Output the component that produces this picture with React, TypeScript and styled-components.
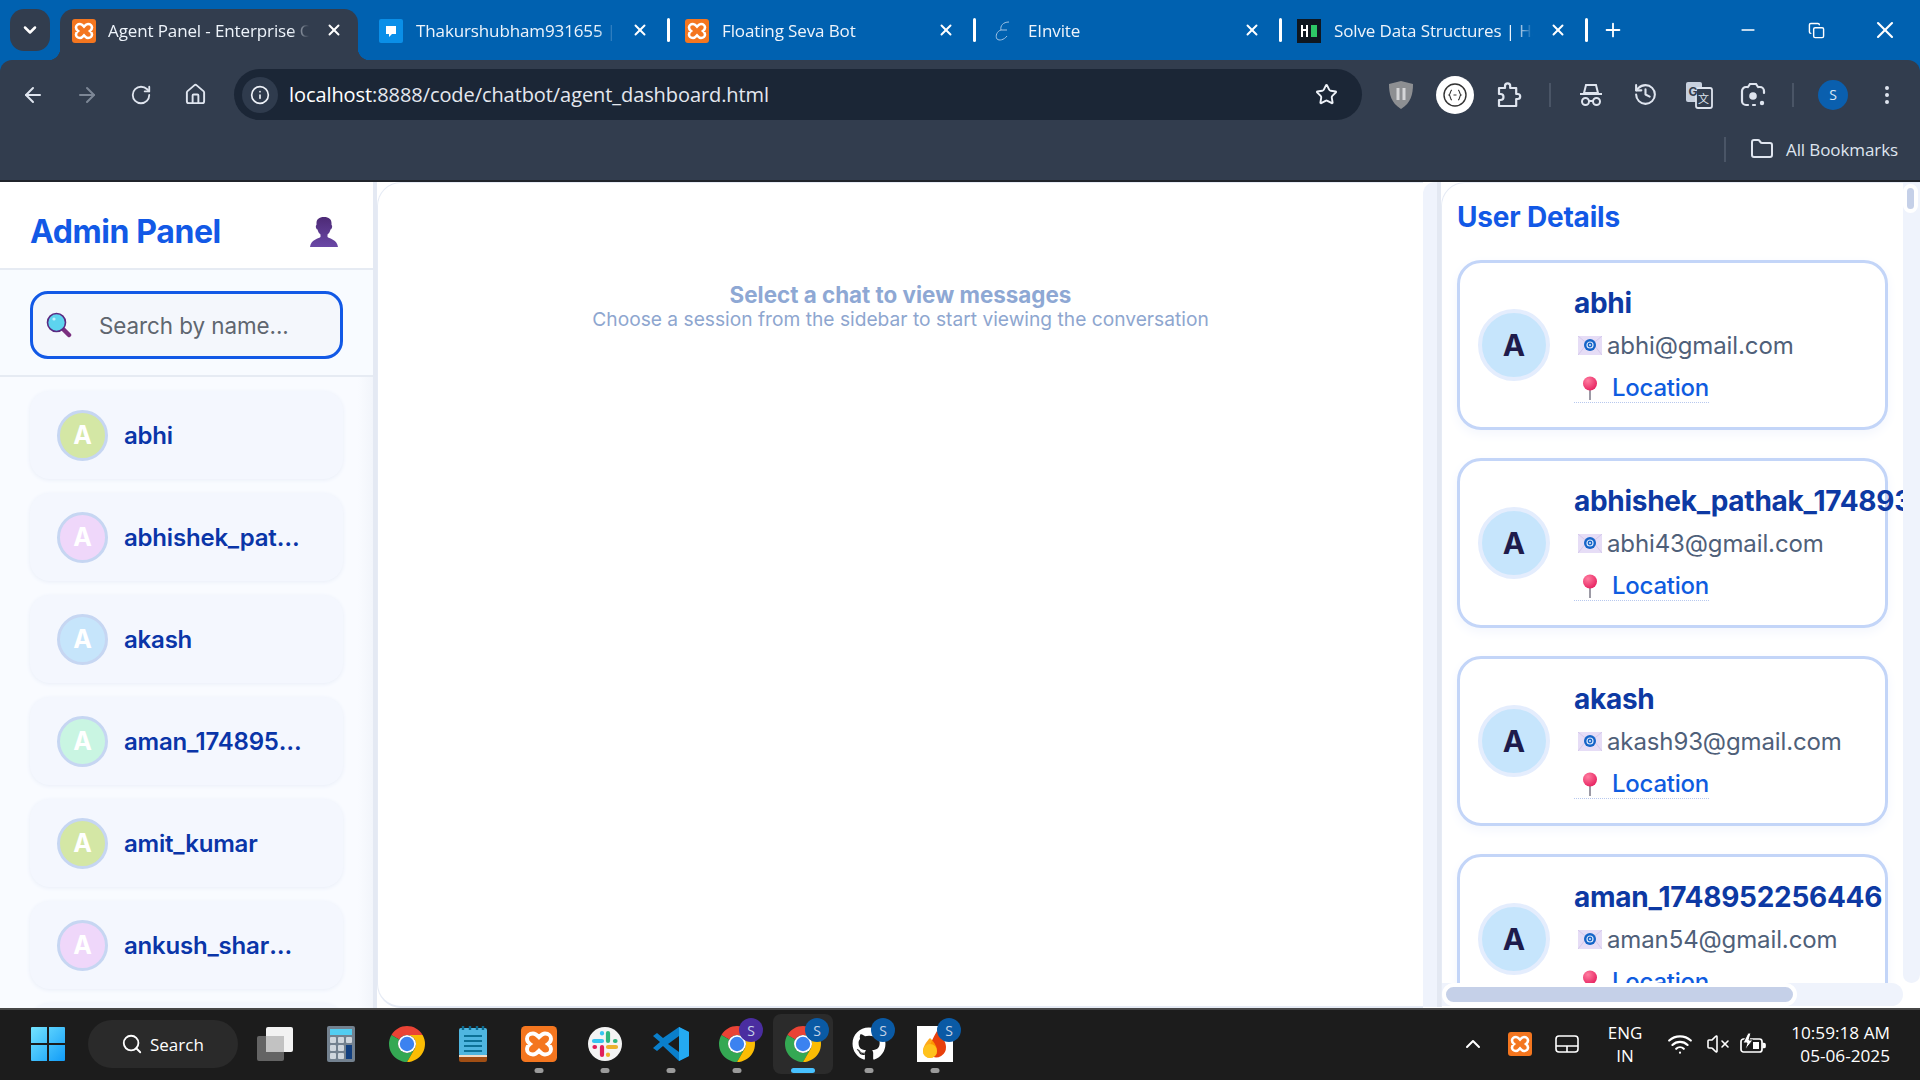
import React from "react";
import styled, { createGlobalStyle } from "styled-components";
import {
  ArrowLeft, ArrowRight, RotateCw, House, Info, Star, History, EllipsisVertical,
  Folder, X, Plus, Minus, Copy, ChevronDown, ChevronUp, Search, Wifi, VolumeX,
} from "lucide-react";
import { FaGithub } from "react-icons/fa";

const Global = createGlobalStyle`
  html, body { margin: 0; padding: 0; background: #fff; overflow: hidden; }
  * { box-sizing: border-box; }
  body { font-family: Inter, "Liberation Sans", sans-serif; }
`;

const Screen = styled.div`
  width: 1920px; height: 1080px; display: flex; flex-direction: column; overflow: hidden; background: #0061b0;
`;

/* ---------- browser chrome ---------- */
const TabStrip = styled.div`
  height: 60px; display: flex; align-items: flex-start; padding-left: 10px; background: #0061b0;
  font-family: "Open Sans", "Noto Sans", sans-serif; color: #fff; flex: none;
`;
const TabMenu = styled.div`
  width: 40px; height: 42px; margin-top: 9px; margin-right: 8px; border-radius: 14px; background: #323d4e;
  display: flex; align-items: center; justify-content: center; color: #fff;
`;
const Tab = styled.div<{ $active?: boolean; $sep?: boolean }>`
  position: relative; width: 306px; height: 51px; margin-top: 9px; padding: 0 20px 8px 15px;
  display: flex; align-items: center; flex: none;
  ${(p) => p.$active && `
    background: #323d4e; border-radius: 14px 14px 0 0; margin-left: 2px; margin-right: 6px; width: 298px; padding: 0 14px 8px 12px;
    &::before, &::after { content: ""; position: absolute; bottom: 0; width: 12px; height: 12px; }
    &::before { left: -12px; background: radial-gradient(circle at 0 0, transparent 12px, #323d4e 12.5px); }
    &::after { right: -12px; background: radial-gradient(circle at 100% 0, transparent 12px, #323d4e 12.5px); }
  `}
  ${(p) => p.$sep && `
    &::after { content: ""; position: absolute; right: 0; top: 9px; width: 3px; height: 24px; background: #fff; border-radius: 2px; }
  `}
`;
const TabTitle = styled.span<{ $active?: boolean }>`
  flex: 1; min-width: 0; margin: 0 15px 0 ${(p) => (p.$active ? 12 : 13)}px; font-size: 17px; white-space: nowrap; overflow: hidden; color: #eef4fb;
  letter-spacing: -0.12px;
  -webkit-mask-image: linear-gradient(90deg, #000 91%, transparent 100%);
  mask-image: linear-gradient(90deg, #000 91%, transparent 100%);
`;
const TabClose = styled.span`
  width: 20px; height: 20px; display: flex; align-items: center; justify-content: center; flex: none; margin-top: -2px;
`;
const NewTab = styled.div`
  width: 50px; height: 42px; margin-top: 9px; display: flex; align-items: center; justify-content: center;
`;
const WindowControls = styled.div`
  margin-left: auto; display: flex; height: 60px; align-items: center;
`;
const WindowButton = styled.div<{ $w: number }>`
  width: ${(p) => p.$w}px; display: flex; justify-content: center;
`;
const FrameBody = styled.div`
  height: 122px; flex: none; background: #323d4e; border-radius: 12px 12px 0 0; border-bottom: 2px solid #20242b;
  padding-top: 9px; display: flex; flex-direction: column; color: #dfe5ef;
  font-family: "Open Sans", "Noto Sans", sans-serif;
`;
const ToolbarRow = styled.div`
  height: 51px; display: flex; align-items: center; padding-left: 6px; flex: none;
`;
const ToolSlot = styled.div<{ $dim?: boolean }>`
  width: 54px; height: 51px; flex: none; display: flex; align-items: center; justify-content: center;
  color: ${(p) => (p.$dim ? "#7d8796" : "#dfe5ef")};
`;
const AddressBar = styled.div`
  width: 1128px; height: 51px; margin: 0 12px; background: #1b2636; border-radius: 26px; flex: none;
  display: flex; align-items: center; padding: 0 24px 0 8px;
`;
const InfoChip = styled.span`
  width: 36px; height: 36px; border-radius: 50%; background: #2f3b4d; display: flex; align-items: center; justify-content: center;
  color: #eef2f8; flex: none;
`;
const Url = styled.span`
  margin-left: 11px; flex: 1; font-size: 20px; color: #e4e8ef; letter-spacing: -0.08px; white-space: nowrap;
  b { font-weight: 400; color: #fff; }
`;
const ToolSep = styled.div<{ $w: number }>`
  width: ${(p) => p.$w}px; display: flex; justify-content: center; flex: none;
  &::before { content: ""; width: 2px; height: 24px; background: #4a5566; }
`;
const ProfileDot = styled.span`
  width: 30px; height: 30px; border-radius: 50%; background: #0a5fae; color: #dbe7f5; font-size: 14px;
  display: flex; align-items: center; justify-content: center;
`;
const BookmarkRow = styled.div`
  height: 42px; margin-top: 8px; display: flex; align-items: center; justify-content: flex-end; padding-right: 22px;
  font-size: 17px; color: #dfe5ef; flex: none;
`;
const BookmarkSep = styled.div`
  width: 2px; height: 25px; background: #4a5566; margin-right: 24px;
`;
const BookmarkLabel = styled.span`
  margin-left: 12px; letter-spacing: -0.1px;
`;

/* ---------- page ---------- */
const Page = styled.div`
  height: 826px; flex: none; display: flex; background: #fff; color: #1e293b;
`;
const Sidebar = styled.aside`
  width: 377px; flex: none; display: flex; flex-direction: column; border-right: 4px solid #e4e9f3; background: #f8fbff;
`;
const SideHeader = styled.header`
  height: 88px; flex: none; background: #fff; border-bottom: 2px solid #e6ebf3; padding: 13px 35px 0 30px;
  display: flex; align-items: center; justify-content: space-between;
`;
const Brand = styled.h1`
  margin: 0; font-size: 32px; font-weight: 700; color: #1259e6; letter-spacing: -0.4px;
`;
const SearchArea = styled.div`
  height: 107px; flex: none; padding: 21px 30px 0 30px; background: #f8fbff; border-bottom: 2px solid #e6ebf3;
`;
const SearchBox = styled.div`
  width: 313px; height: 68px; border: 3px solid #1259e6; border-radius: 18px; background: #f4f7fc;
  display: flex; align-items: center; padding-left: 13px;
`;
const SearchText = styled.span`
  margin-left: 27px; font-size: 22.4px; color: #5f666f; letter-spacing: -0.05px;
`;
const UserList = styled.div`
  flex: 1; min-height: 0; overflow: hidden; padding: 14px 30px 0; display: flex; flex-direction: column; gap: 14px;
  background: linear-gradient(90deg, #f9fbff 96%, #f2f5fb 100%);
`;
const UserRow = styled.div`
  width: 313px; height: 88px; flex: none; border-radius: 20px; background: #f4f7fe; box-shadow: 0 1px 4px #e9eef8;
  display: flex; align-items: center; padding-left: 27px; gap: 16px;
`;
const RowAvatar = styled.span<{ $bg: string }>`
  width: 51px; height: 51px; flex: none; border-radius: 50%; border: 3px solid #c6d6f2; background: ${(p) => p.$bg};
  color: #fff; font-size: 25px; font-weight: 700; display: flex; align-items: center; justify-content: center;
`;
const RowName = styled.span`
  max-width: 181px; font-size: 24px; font-weight: 600; color: #0a35a8; letter-spacing: -0.2px;
  white-space: nowrap; overflow: hidden; text-overflow: ellipsis;
`;
const ChatArea = styled.main`
  width: 1046px; flex: none; background: #fff; border: 1px solid #e6ebf5; border-right: 0; border-bottom-width: 2px;
  border-radius: 24px 0 0 24px; display: flex; flex-direction: column; align-items: center; padding-top: 98px;
`;
const EmptyTitle = styled.div`
  font-size: 22.4px; font-weight: 700; color: #8ea8d4; line-height: 27px;
`;
const EmptyHint = styled.div`
  font-size: 19.2px; color: #8ea6cf; line-height: 23px;
`;
const ChatRail = styled.div`
  width: 18px; flex: none; background: #eff3fc; border-right: 4px solid #e3e8f2; border-radius: 12px 0 0 0;
  margin-bottom: 1px;
`;
const DetailPanel = styled.section`
  width: 479px; flex: none; height: 825px; background: #fff; border: 1px solid #e6ebf5; border-bottom: 0; border-right: 0;
  border-radius: 24px 0 0 0; display: grid; grid-template-columns: 461px 17px; grid-template-rows: 800px 23px; overflow: hidden;
`;
const DetailView = styled.div`
  min-width: 0; overflow: hidden; padding-left: 15px;
`;
const DetailTitle = styled.h2`
  margin: 0; height: 77px; padding-top: 15px; font-size: 28px; line-height: 38px; font-weight: 700; color: #1259e6; letter-spacing: -0.2px;
`;
const Cards = styled.div`
  width: 431px; display: flex; flex-direction: column; gap: 28px;
`;
const Card = styled.article`
  width: 431px; height: 170px; flex: none; border: 3px solid #c3d5f8; border-radius: 24px; background: #fff; box-shadow: 0 4px 12px #f3f6fd;
  display: flex; align-items: center; padding-left: 18px; gap: 24px;
`;
const CardAvatar = styled.span`
  width: 72px; height: 72px; flex: none; border-radius: 50%; background: #c6e5fc; border: 4px solid #e4edfd;
  color: #1e1b4b; font-size: 30px; font-weight: 700; display: flex; align-items: center; justify-content: center;
`;
const CardBody = styled.div`
  display: flex; flex-direction: column; align-items: flex-start; padding-bottom: 2px;
`;
const CardName = styled.div`
  height: 36px; font-size: 28px; line-height: 36px; font-weight: 700; color: #0d39a3; white-space: nowrap; letter-spacing: -0.28px;
`;
const CardEmail = styled.div`
  display: flex; align-items: center; height: 48px; font-size: 24px; color: #4f6079; padding-left: 4px; gap: 5px; letter-spacing: -0.12px;
`;
const CardLink = styled.a`
  display: flex; align-items: center; height: 34px; font-size: 24px; font-weight: 500; color: #0f5ce0;
  border-bottom: 1px dotted #b7c8ee; padding: 4px 0 0 8px; gap: 14px; letter-spacing: -0.25px;
`;
const ScrollRailV = styled.div`
  background: #eff3fc; border-radius: 0 0 10px 10px; padding: 0;
`;
const ScrollThumbV = styled.div`
  width: 15px; height: 29px; margin-top: 1px; background: #c5d0e8; border: 4px solid #fff; border-radius: 10px;
`;
const ScrollRailH = styled.div`
  background: #eff3fc; border-radius: 0 12px 12px 0;
`;
const ScrollThumbH = styled.div`
  width: 355px; height: 23px; background: #c5d0e8; border: 4px solid #fff; border-radius: 12px;
`;
const ScrollCorner = styled.div`
  background: #fff;
`;

/* ---------- taskbar ---------- */
const Taskbar = styled.footer`
  height: 72px; flex: none; background: #1c1c1c; border-top: 2px solid #474747; display: flex; align-items: center;
  padding: 0 0 2px 15px; color: #fff; font-family: "Open Sans", "Noto Sans", sans-serif;
`;
const TaskSlot = styled.div<{ $active?: boolean }>`
  position: relative; width: 60px; height: 60px; margin: 0 3px; flex: none; display: flex; align-items: center; justify-content: center;
  border-radius: 8px; background: ${(p) => (p.$active ? "#2b2b2b" : "transparent")};
`;
const TaskPill = styled.div`
  width: 150px; height: 48px; margin: 0 4px 0 7px; border-radius: 24px; background: #2a2a2a; display: flex; align-items: center;
  padding-left: 33px; gap: 7px; font-size: 17px; flex: none;
`;
const RunDot = styled.span<{ $active?: boolean }>`
  position: absolute; bottom: 1px; left: 50%; transform: translateX(-50%); height: 5px; border-radius: 3px;
  width: ${(p) => (p.$active ? 24 : 9)}px; background: ${(p) => (p.$active ? "#47c1ff" : "#9a9a9a")};
`;
const Badge = styled.span<{ $bg: string }>`
  position: absolute; top: 4px; left: 32px; width: 24px; height: 24px; border-radius: 50%; background: ${(p) => p.$bg};
  color: #c4d2e6; font-size: 14px; display: flex; align-items: center; justify-content: center;
`;
const Tray = styled.div`
  margin-left: auto; display: flex; align-items: center; padding-right: 30px; height: 100%;
`;
const TraySlot = styled.div<{ $w: number }>`
  width: ${(p) => p.$w}px; flex: none; display: flex; justify-content: center; align-items: center;
`;
const TrayLang = styled.div`
  width: 70px; flex: none; text-align: center; font-size: 17px; line-height: 23px;
`;
const Clock = styled.div`
  width: 120px; flex: none; text-align: right; font-size: 17.2px; line-height: 23px;
`;

/* ---------- drawings ---------- */
const Xampp = ({ s }: { s: number }) => (
  <svg width={s} height={s} viewBox="0 0 24 24">
    <rect width="24" height="24" rx="3" fill="#f4761f" />
    <path d="M8 5c-2.5 0-4 1.7-4 3.5 0 1.4.8 2.6 2 3.5-1.2.9-2 2.1-2 3.5C4 17.3 5.5 19 8 19c1.8 0 2.8-1.2 4-2.5 1.2 1.3 2.2 2.5 4 2.5 2.5 0 4-1.7 4-3.5 0-1.4-.8-2.6-2-3.5 1.2-.9 2-2.1 2-3.5C20 6.7 18.5 5 16 5c-1.8 0-2.8 1.2-4 2.5C10.8 6.2 9.8 5 8 5z" fill="none" stroke="#fff" strokeWidth="2.6" />
  </svg>
);
const ChatFav = () => (
  <svg width="24" height="24" viewBox="0 0 24 24">
    <rect width="24" height="24" rx="2" fill="#0a8fe8" />
    <path d="M7 7h10v8h-4l-3 3v-3H7z" fill="#fff" />
  </svg>
);
const HackerFav = () => (
  <svg width="24" height="24" viewBox="0 0 24 24">
    <rect width="24" height="24" fill="#0f1720" />
    <path d="M4 6h2v4h3V6h2v12H9v-6H6v6H4z" fill="#fff" />
    <rect x="14" y="6" width="6" height="12" fill="#2ec866" />
  </svg>
);
const ScriptFav = () => (
  <svg width="24" height="24" viewBox="0 0 22 24">
    <path d="M17 3C11 3 8 7 9 11c-4 1-6 6-4 9 2 2 7 1 10-3M9 11h6" fill="none" stroke="#9fc2e4" strokeWidth="1" />
  </svg>
);
const Shield = () => (
  <svg width="26" height="30" viewBox="0 0 26 30">
    <path d="M13 1l12 3c0 10-2 19-12 25C3 23 1 14 1 4z" fill="#8d8f92" />
    <path d="M10 8v12M16 8v12" stroke="#d5d6d8" strokeWidth="3" />
  </svg>
);
const ExtCircle = () => (
  <svg width="38" height="38" viewBox="0 0 38 38">
    <circle cx="19" cy="19" r="19" fill="#fff" />
    <circle cx="19" cy="19" r="11" fill="none" stroke="#333" strokeWidth="1.4" />
    <path d="M16 14c-2 0-1 4-3 5 2 1 1 5 3 5M22 14c2 0 1 4 3 5-2 1-1 5-3 5M17.5 19h3" fill="none" stroke="#333" strokeWidth="1.1" />
  </svg>
);
const PuzzleIcon = () => (
  <svg width="26" height="28" viewBox="0 0 26 28" fill="none" stroke="#dfe5ef" strokeWidth="2.2" strokeLinejoin="round">
    <path d="M3 7h6V5a2.6 2.6 0 0 1 5.2 0v2h6v6h1.5a2.5 2.5 0 0 1 0 5h-1.5v7H3v-6h1.5a3 3 0 0 0 0-6H3z" />
  </svg>
);
const SpyIcon = () => (
  <svg width="26" height="26" viewBox="0 0 26 26" fill="none" stroke="#dfe5ef" strokeWidth="2">
    <path d="M8 3h10l2 8H6zM2 12h22" />
    <circle cx="7.5" cy="19.5" r="3.5" />
    <circle cx="18.5" cy="19.5" r="3.5" />
    <path d="M11 19h4" />
  </svg>
);
const TranslateIcon = () => (
  <svg width="28" height="28" viewBox="0 0 28 28">
    <rect x="1" y="1" width="16" height="20" rx="2" fill="#c7d0de" />
    <rect x="11" y="7" width="16" height="20" rx="2" fill="#323d4e" stroke="#dfe5ef" strokeWidth="1.8" />
    <text x="3.5" y="15" fontSize="12" fontWeight="700" fontFamily="Inter" fill="#323d4e">G</text>
    <text x="13" y="22" fontSize="11" fontFamily="Noto Sans CJK SC" fill="#dfe5ef">文</text>
  </svg>
);
const LensIcon = () => (
  <svg width="26" height="28" viewBox="0 0 26 28" fill="none" stroke="#dfe5ef" strokeWidth="2.2" strokeLinecap="round">
    <path d="M8 6H6a4 4 0 0 0-4 4v10a4 4 0 0 0 4 4h2M18 6h2a4 4 0 0 1 4 4v2M8 6l2-3h6l2 3M13 24h2" />
    <circle cx="13" cy="15" r="3.8" fill="#dfe5ef" stroke="none" />
    <circle cx="22" cy="22" r="2.2" fill="#dfe5ef" stroke="none" />
  </svg>
);
const Magnifier = () => (
  <svg width="26" height="26" viewBox="0 0 26 26">
    <path d="M15 15l8 8" stroke="#7a2f7f" strokeWidth="4.5" strokeLinecap="round" />
    <circle cx="10.5" cy="10.5" r="9" fill="#5dd4ef" stroke="#5a2a82" strokeWidth="1.6" />
    <circle cx="8" cy="7" r="1.6" fill="#bff2ff" />
  </svg>
);
const Bust = () => (
  <svg width="28" height="30" viewBox="0 0 28 30">
    <defs>
      <linearGradient id="bust" x1="0" y1="0" x2="0" y2="1">
        <stop offset="0" stopColor="#4d2a76" />
        <stop offset="1" stopColor="#6a48a6" />
      </linearGradient>
    </defs>
    <path d="M14 0C9 0 6.5 2.5 6.5 6v2C5.500 8 5.500 12 7.500 12.500c.5 2 1.500 4 3 5V20C8 22 1 22.500 0 30h28c-1-7.500-8-8-10.500-10v-2.500c1.500-1 2.500-3 3-5C22.500 12 22.500 8 21.500 8V6C21.500 2.500 19 0 14 0z" fill="url(#bust)" />
  </svg>
);
const Mail = () => (
  <svg width="24" height="19" viewBox="0 0 24 19">
    <rect width="24" height="19" fill="#e6ddf6" />
    <path d="M0 0l12 10L24 0M0 19l8-10M24 19l-8-10" stroke="#cfc3e8" strokeWidth="0.8" fill="none" />
    <circle cx="12" cy="9" r="6" fill="#1565c8" />
    <circle cx="12" cy="9" r="3" fill="none" stroke="#dce8fb" strokeWidth="1.2" />
    <circle cx="12" cy="9" r="1" fill="#dce8fb" />
  </svg>
);
const Pin = () => (
  <svg width="16" height="24" viewBox="0 0 16 24">
    <defs>
      <radialGradient id="pin" cx="0.35" cy="0.3" r="0.8">
        <stop offset="0" stopColor="#ff7da0" />
        <stop offset="1" stopColor="#e51c5c" />
      </radialGradient>
    </defs>
    <rect x="7" y="10" width="2" height="14" fill="#9c9aa5" />
    <circle cx="8" cy="7.5" r="7" fill="url(#pin)" />
  </svg>
);
const WinLogo = () => (
  <svg width="36" height="36" viewBox="0 0 36 36">
    <defs>
      <linearGradient id="win" x1="0" y1="0" x2="1" y2="1">
        <stop offset="0" stopColor="#74e4ff" />
        <stop offset="1" stopColor="#119cf8" />
      </linearGradient>
    </defs>
    <path d="M1 2a1 1 0 0 1 1-1h15v16H1zM19 1h15a1 1 0 0 1 1 1v15H19zM1 19h16v16H2a1 1 0 0 1-1-1zM19 19h16v15a1 1 0 0 1-1 1H19z" fill="url(#win)" />
  </svg>
);
const TaskView = () => (
  <svg width="38" height="36" viewBox="0 0 38 36">
    <rect x="10" y="1" width="27" height="25" rx="2" fill="#f2f2f2" />
    <rect x="1" y="10" width="27" height="25" rx="2" fill="#6a6a6a" fillOpacity="0.92" />
    <rect x="10" y="10" width="18" height="16" fill="#c2c2c2" />
  </svg>
);
const Calc = () => (
  <svg width="28" height="36" viewBox="0 0 28 36">
    <rect width="28" height="36" rx="2" fill="#73818f" />
    <rect x="3" y="3" width="22" height="6" fill="#52cdf1" />
    {[0, 1, 2].map((r) => [0, 1, 2].map((c) => (c === 2 && r > 0 ? null : (
      <rect key={`${r}${c}`} x={3 + c * 8} y={11 + r * 8} width="6" height="6" rx="1" fill="#cfd6dd" />
    ))))}
    <rect x="19" y="19" width="6" height="14" fill="#123f7f" />
  </svg>
);
const ChromeLogo = () => (
  <svg width="36" height="36" viewBox="4 4 40 40">
    <path d="M6.68 14A20 20 0 0 1 41.32 14H24a10 10 0 0 0-8.66 5z" fill="#ea4335" />
    <path d="M6.68 14l8.66 5A10 10 0 0 0 32.66 29L24 44A20 20 0 0 1 6.68 14z" fill="#34a853" />
    <path d="M41.32 14A20 20 0 0 1 24 44l8.66-15A10 10 0 0 0 24 14z" fill="#fbbc04" />
    <circle cx="24" cy="24" r="10" fill="#fff" />
    <circle cx="24" cy="24" r="8" fill="#3b82f0" />
  </svg>
);
const Notepad = () => (
  <svg width="28" height="36" viewBox="0 0 28 36">
    <rect y="2" width="28" height="28" rx="2" fill="#4fb6e0" />
    <path d="M0 30h28v4a2 2 0 0 1-2 2H2a2 2 0 0 1-2-2z" fill="#a04e14" />
    <rect y="29" width="28" height="2" fill="#f0ddc8" />
    <path d="M5 10h18M5 15h18M5 20h18M5 25h18" stroke="#0c7196" strokeWidth="2" />
    <path d="M4 0v4M11 0v4M18 0v4M24 0v4" stroke="#0c6a8f" strokeWidth="2.4" />
  </svg>
);
const Slack = () => (
  <svg width="36" height="36" viewBox="0 0 36 36">
    <circle cx="18" cy="18" r="17" fill="#f4f4f4" />
    <g strokeLinecap="round" strokeWidth="4.2">
      <path d="M7 15h8" stroke="#36c5f0" /><path d="M15 7v.5" stroke="#36c5f0" />
      <path d="M21 7v8" stroke="#2eb67d" /><path d="M28 15h.5" stroke="#2eb67d" />
      <path d="M21 21h8" stroke="#ecb22e" /><path d="M21 29v-.5" stroke="#ecb22e" />
      <path d="M15 21v8" stroke="#e01e5a" /><path d="M8 21h-.5" stroke="#e01e5a" />
    </g>
  </svg>
);
const VsCode = () => (
  <svg width="36" height="36" viewBox="0 0 36 36">
    <path d="M26 1l10 5v24l-10 5L10 20l-6 5-4-3 7-6-7-6 4-3 6 5z" fill="#0a7fcb" />
    <path d="M26 1l10 5v24l-10 5z" fill="#24aaf2" />
    <path d="M26 10L15 18l11 8z" fill="#1c1c1c" />
  </svg>
);
const Firebase = () => (
  <svg width="36" height="36" viewBox="0 0 36 36">
    <rect width="36" height="36" fill="#fff" />
    <path d="M20 5c5 5 9 11 9 16a10 10 0 0 1-15 9C9 27 12 19 20 5z" fill="#e8400c" />
    <path d="M13 12c5 5 7 9 7 13a7 7 0 0 1-14 0c0-4 3-9 7-13z" fill="#ffa000" fillOpacity="0.9" />
    <circle cx="13" cy="25" r="7" fill="#ffc21c" />
  </svg>
);
const Touchpad = () => (
  <svg width="24" height="18" viewBox="0 0 24 18" fill="none" stroke="#fff" strokeWidth="1.6">
    <rect x="1" y="1" width="22" height="16" rx="3" />
    <path d="M1 11h22M12 11v6" />
  </svg>
);
const Battery = () => (
  <svg width="26" height="22" viewBox="0 0 26 22" fill="none" stroke="#fff" strokeWidth="1.7">
    <rect x="1" y="6" width="21" height="13" rx="2.5" />
    <path d="M22.5 10.5h1.5a1 1 0 0 1 1 1v2a1 1 0 0 1-1 1h-1.5" fill="#fff" />
    <path d="M8 0L3 10h4l-2 7 8-10H9l2-7z" fill="#fff" stroke="#1c1c1c" strokeWidth="1" />
    <rect x="13" y="9" width="6" height="7" fill="#fff" stroke="none" />
  </svg>
);

const users = [
  { n: "abhi", bg: "#d4e7a5" },
  { n: "abhishek_pathak_1748936512", bg: "#efd7fa" },
  { n: "akash", bg: "#c6e5fb" },
  { n: "aman_1748952256446", bg: "#c9f5e2" },
  { n: "amit_kumar", bg: "#d4e7a5" },
  { n: "ankush_sharma_1748952", bg: "#efd7fa" },
  { n: "anuj", bg: "#c6e5fb" },
];
const details = [
  { n: "abhi", e: "abhi@gmail.com" },
  { n: "abhishek_pathak_1748932256446", e: "abhi43@gmail.com" },
  { n: "akash", e: "akash93@gmail.com" },
  { n: "aman_1748952256446", e: "aman54@gmail.com" },
];
const tabs = [
  { t: "Thakurshubham931655 | GitHub", i: <ChatFav /> },
  { t: "Floating Seva Bot", i: <Xampp s={24} /> },
  { t: "EInvite", i: <ScriptFav /> },
  { t: "Solve Data Structures | HackerRank", i: <HackerFav /> },
];

export default function App() {
  return (
    <Screen>
      <Global />
      <TabStrip>
        <TabMenu><ChevronDown size={20} strokeWidth={3} /></TabMenu>
        <Tab $active>
          <Xampp s={24} />
          <TabTitle $active>Agent Panel - Enterprise Chat</TabTitle>
          <TabClose><X size={18} strokeWidth={2.6} /></TabClose>
        </Tab>
        {tabs.map((t) => (
          <Tab key={t.t} $sep>
            {t.i}
            <TabTitle>{t.t}</TabTitle>
            <TabClose><X size={18} strokeWidth={2.6} /></TabClose>
          </Tab>
        ))}
        <NewTab><Plus size={22} strokeWidth={2} /></NewTab>
        <WindowControls>
          <WindowButton $w={68}><Minus size={20} strokeWidth={2} /></WindowButton>
          <WindowButton $w={68}><Copy size={17} strokeWidth={2} /></WindowButton>
          <WindowButton $w={70}><X size={28} strokeWidth={1.8} /></WindowButton>
        </WindowControls>
      </TabStrip>
      <FrameBody>
        <ToolbarRow>
          <ToolSlot><ArrowLeft size={24} /></ToolSlot>
          <ToolSlot $dim><ArrowRight size={24} /></ToolSlot>
          <ToolSlot><RotateCw size={22} /></ToolSlot>
          <ToolSlot><House size={23} /></ToolSlot>
          <AddressBar>
            <InfoChip><Info size={20} /></InfoChip>
            <Url><b>localhost</b>:8888/code/chatbot/agent_dashboard.html</Url>
            <Star size={23} color="#eef2f8" strokeWidth={2} />
          </AddressBar>
          <ToolSlot><Shield /></ToolSlot>
          <ToolSlot><ExtCircle /></ToolSlot>
          <ToolSlot><PuzzleIcon /></ToolSlot>
          <ToolSep $w={28} />
          <ToolSlot><SpyIcon /></ToolSlot>
          <ToolSlot><History size={25} /></ToolSlot>
          <ToolSlot><TranslateIcon /></ToolSlot>
          <ToolSlot><LensIcon /></ToolSlot>
          <ToolSep $w={26} />
          <ToolSlot><ProfileDot>S</ProfileDot></ToolSlot>
          <ToolSlot><EllipsisVertical size={24} /></ToolSlot>
        </ToolbarRow>
        <BookmarkRow>
          <BookmarkSep />
          <Folder size={24} />
          <BookmarkLabel>All Bookmarks</BookmarkLabel>
        </BookmarkRow>
      </FrameBody>
      <Page>
        <Sidebar>
          <SideHeader>
            <Brand>Admin Panel</Brand>
            <Bust />
          </SideHeader>
          <SearchArea>
            <SearchBox>
              <Magnifier />
              <SearchText>Search by name...</SearchText>
            </SearchBox>
          </SearchArea>
          <UserList>
            {users.map((u) => (
              <UserRow key={u.n}>
                <RowAvatar $bg={u.bg}>A</RowAvatar>
                <RowName>{u.n}</RowName>
              </UserRow>
            ))}
          </UserList>
        </Sidebar>
        <ChatArea>
          <EmptyTitle>Select a chat to view messages</EmptyTitle>
          <EmptyHint>Choose a session from the sidebar to start viewing the conversation</EmptyHint>
        </ChatArea>
        <ChatRail />
        <DetailPanel>
          <DetailView>
            <DetailTitle>User Details</DetailTitle>
            <Cards>
              {details.map((d) => (
                <Card key={d.n}>
                  <CardAvatar>A</CardAvatar>
                  <CardBody>
                    <CardName>{d.n}</CardName>
                    <CardEmail><Mail />{d.e}</CardEmail>
                    <CardLink><Pin />Location</CardLink>
                  </CardBody>
                </Card>
              ))}
            </Cards>
          </DetailView>
          <ScrollRailV><ScrollThumbV /></ScrollRailV>
          <ScrollRailH><ScrollThumbH /></ScrollRailH>
          <ScrollCorner />
        </DetailPanel>
      </Page>
      <Taskbar>
        <TaskSlot><WinLogo /></TaskSlot>
        <TaskPill><Search size={22} strokeWidth={2} />Search</TaskPill>
        <TaskSlot><TaskView /></TaskSlot>
        <TaskSlot><Calc /></TaskSlot>
        <TaskSlot><ChromeLogo /></TaskSlot>
        <TaskSlot><Notepad /></TaskSlot>
        <TaskSlot><Xampp s={36} /><RunDot /></TaskSlot>
        <TaskSlot><Slack /><RunDot /></TaskSlot>
        <TaskSlot><VsCode /><RunDot /></TaskSlot>
        <TaskSlot><ChromeLogo /><Badge $bg="#4a2da0">S</Badge><RunDot /></TaskSlot>
        <TaskSlot $active><ChromeLogo /><Badge $bg="#0a5aa5">S</Badge><RunDot $active /></TaskSlot>
        <TaskSlot><FaGithub size={34} color="#fff" /><Badge $bg="#0a5aa5">S</Badge><RunDot /></TaskSlot>
        <TaskSlot><Firebase /><Badge $bg="#0a5aa5">S</Badge><RunDot /></TaskSlot>
        <Tray>
          <TraySlot $w={46}><ChevronUp size={24} strokeWidth={2} /></TraySlot>
          <TraySlot $w={48}><Xampp s={24} /></TraySlot>
          <TraySlot $w={46}><Touchpad /></TraySlot>
          <TrayLang>ENG<br />IN</TrayLang>
          <TraySlot $w={40}><Wifi size={26} strokeWidth={2} /></TraySlot>
          <TraySlot $w={35}><VolumeX size={24} strokeWidth={1.6} /></TraySlot>
          <TraySlot $w={35}><Battery /></TraySlot>
          <Clock>10:59:18 AM<br />05-06-2025</Clock>
        </Tray>
      </Taskbar>
    </Screen>
  );
}
